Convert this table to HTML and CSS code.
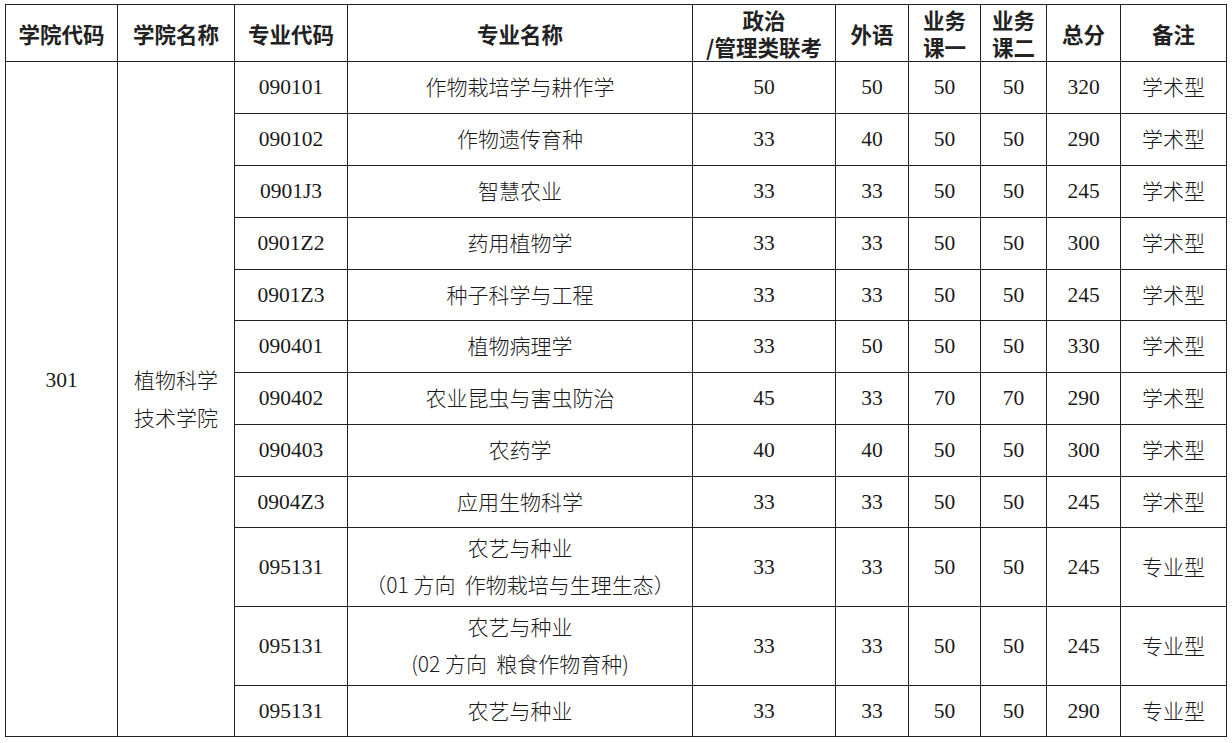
FILE: index.html
```html
<!DOCTYPE html>
<html lang="zh">
<head>
<meta charset="utf-8">
<link rel="stylesheet" href="styles.css">
</head>
<body>
<table class="score">
<colgroup>
<col class="c1"><col class="c2"><col class="c3"><col class="c4"><col class="c5"><col class="c6"><col class="c7"><col class="c8"><col class="c9"><col class="c10">
</colgroup>
<thead>
<tr class="hd">
<th>学院代码</th><th>学院名称</th><th>专业代码</th><th>专业名称</th><th class="dbl"><span class="ln">政治</span><span class="ln">/管理类联考</span></th><th>外语</th><th class="dbl"><span class="ln">业务</span><span class="ln">课一</span></th><th class="dbl"><span class="ln">业务</span><span class="ln">课二</span></th><th>总分</th><th>备注</th>
</tr>
</thead>
<tbody>
<tr class="r52"><td rowspan="12" class="code">301</td><td rowspan="12" class="name">植物科学<br>技术学院</td><td>090101</td><td class="cn">作物栽培学与耕作学</td><td>50</td><td>50</td><td>50</td><td>50</td><td>320</td><td class="cn">学术型</td></tr>
<tr class="r52"><td>090102</td><td class="cn">作物遗传育种</td><td>33</td><td>40</td><td>50</td><td>50</td><td>290</td><td class="cn">学术型</td></tr>
<tr class="r52"><td>0901J3</td><td class="cn">智慧农业</td><td>33</td><td>33</td><td>50</td><td>50</td><td>245</td><td class="cn">学术型</td></tr>
<tr class="r52"><td>0901Z2</td><td class="cn">药用植物学</td><td>33</td><td>33</td><td>50</td><td>50</td><td>300</td><td class="cn">学术型</td></tr>
<tr class="r51"><td>0901Z3</td><td class="cn">种子科学与工程</td><td>33</td><td>33</td><td>50</td><td>50</td><td>245</td><td class="cn">学术型</td></tr>
<tr class="r52"><td>090401</td><td class="cn">植物病理学</td><td>33</td><td>50</td><td>50</td><td>50</td><td>330</td><td class="cn">学术型</td></tr>
<tr class="r52"><td>090402</td><td class="cn">农业昆虫与害虫防治</td><td>45</td><td>33</td><td>70</td><td>70</td><td>290</td><td class="cn">学术型</td></tr>
<tr class="r52"><td>090403</td><td class="cn">农药学</td><td>40</td><td>40</td><td>50</td><td>50</td><td>300</td><td class="cn">学术型</td></tr>
<tr class="r51"><td>0904Z3</td><td class="cn">应用生物科学</td><td>33</td><td>33</td><td>50</td><td>50</td><td>245</td><td class="cn">学术型</td></tr>
<tr class="r79"><td>095131</td><td class="cn two">农艺与种业<br>（01 方向&nbsp; 作物栽培与生理生态）</td><td>33</td><td>33</td><td>50</td><td>50</td><td>245</td><td class="cn">专业型</td></tr>
<tr class="r79"><td>095131</td><td class="cn two">农艺与种业<br>(02 方向&nbsp; 粮食作物育种)</td><td>33</td><td>33</td><td>50</td><td>50</td><td>245</td><td class="cn">专业型</td></tr>
<tr class="r51"><td>095131</td><td class="cn">农艺与种业</td><td>33</td><td>33</td><td>50</td><td>50</td><td>290</td><td class="cn">专业型</td></tr>
</tbody>
</table>
</body>
</html>
```
FILE: styles.css
```css
html, body {
  margin: 0;
  padding: 0;
  background: #fff;
}
body {
  padding: 4px 0 0 5px;
}
.score {
  border-collapse: collapse;
  table-layout: fixed;
  width: 1221px;
  color: #1a1a1a;
  font-family: "Liberation Serif", "Noto Sans CJK SC", serif;
  font-size: 21.5px;
}
.c1 { width: 112px; }
.c2 { width: 117px; }
.c3 { width: 113px; }
.c4 { width: 345px; }
.c5 { width: 143px; }
.c6 { width: 73px; }
.c7 { width: 72px; }
.c8 { width: 66px; }
.c9 { width: 74px; }
.c10 { width: 106px; }
.score th, .score td {
  border: 1px solid #222;
  padding: 0;
  text-align: center;
  vertical-align: middle;
}
.score th {
  font-family: "Noto Sans CJK SC", sans-serif;
  font-weight: 700;
  font-size: 21.5px;
  line-height: 27px;
  color: #222;
}
.ln {
  display: block;
  height: 27px;
  line-height: 27px;
}
.hd { height: 57px; }
.r52 { height: 52px; }
.r51 { height: 51px; }
.r79 { height: 79px; }
.score td.cn {
  font-family: "Noto Sans CJK SC", sans-serif;
  font-weight: 300;
  font-size: 21px;
  padding-bottom: 3px;
}
.score td.two {
  line-height: 37px;
  padding-bottom: 2px;
}
.score td.code {
  padding-bottom: 38px;
}
.score td.name {
  font-family: "Noto Sans CJK SC", sans-serif;
  font-weight: 300;
  font-size: 21px;
  line-height: 38px;
  padding-bottom: 2px;
}
```
